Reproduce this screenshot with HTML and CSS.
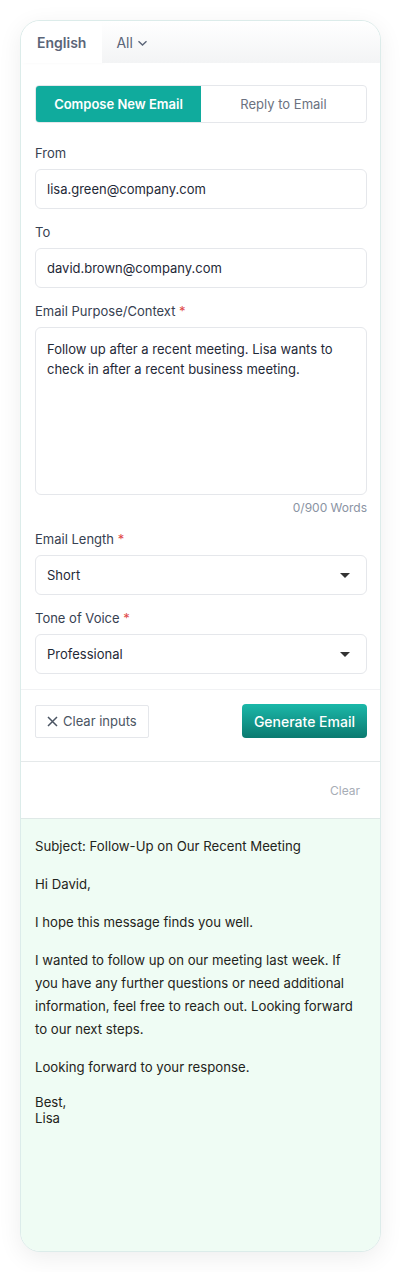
FILE: index.html
```html
<!DOCTYPE html>
<html lang="en">
<head>
    <meta charset="UTF-8">
    <meta name="viewport" content="width=device-width, initial-scale=1.0">
    <title>Email Writer</title>
    <link rel="stylesheet" href="styles.css">
</head>
<body>
    <div class="card">
        <div class="tabs">
            <div class="tab active">English</div>
            <div class="tab">All
                <svg class="chev" width="11" height="10" viewBox="0 0 11 10"><path d="M1.5 3.2 L5.5 7 L9.5 3.2" fill="none" stroke="#5b6578" stroke-width="1.4"/></svg>
            </div>
            <div class="tab-fill"></div>
        </div>

        <div class="form">
            <div class="segmented">
                <div class="seg active">Compose New Email</div>
                <div class="seg">Reply to Email</div>
            </div>

            <div class="field">
                <label>From</label>
                <div class="input">lisa.green@company.com</div>
            </div>

            <div class="field">
                <label>To</label>
                <div class="input">david.brown@company.com</div>
            </div>

            <div class="field">
                <label>Email Purpose/Context <span class="req">*</span></label>
                <div class="textarea">Follow up after a recent meeting. Lisa wants to check in after a recent business meeting.</div>
                <div class="counter">0/900 Words</div>
            </div>

            <div class="field">
                <label>Email Length <span class="req">*</span></label>
                <div class="input select">Short <span class="caret"></span></div>
            </div>

            <div class="field">
                <label>Tone of Voice <span class="req">*</span></label>
                <div class="input select">Professional <span class="caret"></span></div>
            </div>
        </div>

        <div class="actions">
            <button class="btn-clear">
                <svg width="11" height="11" viewBox="0 0 11 11"><path d="M1 1 L10 10 M10 1 L1 10" stroke="#4b5563" stroke-width="1.5"/></svg>
                Clear inputs
            </button>
            <button class="btn-generate">Generate Email</button>
        </div>

        <div class="result-bar">
            <span class="clear-link">Clear</span>
        </div>

        <div class="output">
            <p>Subject: Follow-Up on Our Recent Meeting</p>
            <p>Hi David,</p>
            <p>I hope this message finds you well.</p>
            <p>I wanted to follow up on our meeting last week. If you have any further questions or need additional information, feel free to reach out. Looking forward to our next steps.</p>
            <p>Looking forward to your response.</p>
            <p class="sign">Best,<br>Lisa</p>
        </div>
    </div>
</body>
</html>
```

FILE: styles.css
```css
* {
    box-sizing: border-box;
}

body {
    margin: 0;
    padding: 20px 21px 20px 20px;
    font-family: Inter, "Noto Sans", sans-serif;
    background-color: #ffffff;
    color: #1f2937;
}

.card {
    height: 1232px;
    display: flex;
    flex-direction: column;
    border: 1px solid #dcecea;
    border-radius: 20px;
    overflow: hidden;
    background: #ffffff;
    box-shadow: 0 6px 24px rgba(0, 0, 0, 0.07);
}

.tabs {
    display: flex;
    height: 42px;
    flex-shrink: 0;
}

.tab {
    display: flex;
    align-items: center;
    gap: 4px;
    padding: 0 14px;
    font-size: 14px;
    color: #5b6578;
    background: linear-gradient(#ffffff, #f3f4f5);
}

.tab.active {
    padding: 0 16px;
    font-weight: 600;
    background: #ffffff;
    box-shadow: 2px 0 4px rgba(0, 0, 0, 0.03);
}

.chev {
    margin-top: 1px;
}

.tab-fill {
    flex: 1;
    background: linear-gradient(#ffffff, #f3f4f5);
}

.form {
    padding: 22px 13px 15px 14px;
}

.segmented {
    display: flex;
    height: 38px;
    border: 1px solid #e5e7eb;
    border-radius: 4px;
    overflow: hidden;
    margin-bottom: 20px;
}

.seg {
    flex: 1;
    display: flex;
    align-items: center;
    justify-content: center;
    font-size: 13px;
    color: #6b7280;
}

.seg.active {
    background-color: #10ab9d;
    color: #ffffff;
    font-weight: 600;
}

.field {
    margin-bottom: 13px;
}

.field:last-child {
    margin-bottom: 0;
}

.field label {
    display: block;
    font-size: 13px;
    line-height: 20px;
    color: #374151;
    margin-bottom: 6px;
}

.req {
    color: #e04848;
}

.input {
    height: 40px;
    display: flex;
    align-items: center;
    padding: 0 11px;
    border: 1px solid #e5e7eb;
    border-radius: 6px;
    font-size: 13px;
    color: #1f2937;
}

.select {
    justify-content: space-between;
}

.caret {
    width: 0;
    height: 0;
    margin-right: 5px;
    border-left: 5px solid transparent;
    border-right: 5px solid transparent;
    border-top: 5px solid #333333;
}

.textarea {
    height: 168px;
    padding: 11px 11px;
    border: 1px solid #e5e7eb;
    border-radius: 6px;
    font-size: 13px;
    line-height: 20px;
    color: #1f2937;
}

.counter {
    margin-top: 5px;
    text-align: right;
    font-size: 12px;
    line-height: 16px;
    color: #8a93a3;
}

.actions {
    display: flex;
    justify-content: space-between;
    align-items: center;
    flex-shrink: 0;
    padding: 14px 13px 23px 14px;
    border-top: 1px solid #f1f2f4;
    border-bottom: 1px solid #e5e9ea;
}

.btn-clear {
    display: flex;
    align-items: center;
    gap: 5px;
    height: 33px;
    padding: 0 11px;
    border: 1px solid #e5e7eb;
    border-radius: 2px;
    background: #ffffff;
    font-family: inherit;
    font-size: 13px;
    color: #4b5563;
}

.btn-generate {
    height: 34px;
    padding: 0 12px;
    border: none;
    border-radius: 4px;
    background: linear-gradient(#1bb8a9, #0b7a70);
    font-family: inherit;
    font-size: 14px;
    font-weight: 500;
    color: #ffffff;
}

.result-bar {
    display: flex;
    justify-content: flex-end;
    align-items: center;
    flex-shrink: 0;
    height: 57px;
    padding: 0 20px;
    border-bottom: 1px solid #dfe9e7;
}

.clear-link {
    font-size: 12px;
    color: #a7adb6;
}

.output {
    flex: 1;
    background-color: #effcf4;
    padding: 16px 20px 16px 14px;
}

.output p {
    margin: 0 0 15px 0;
    font-size: 13.2px;
    line-height: 23px;
    color: #1f2420;
}

.output p.sign {
    margin-top: 1px;
    line-height: 16px;
}
```
